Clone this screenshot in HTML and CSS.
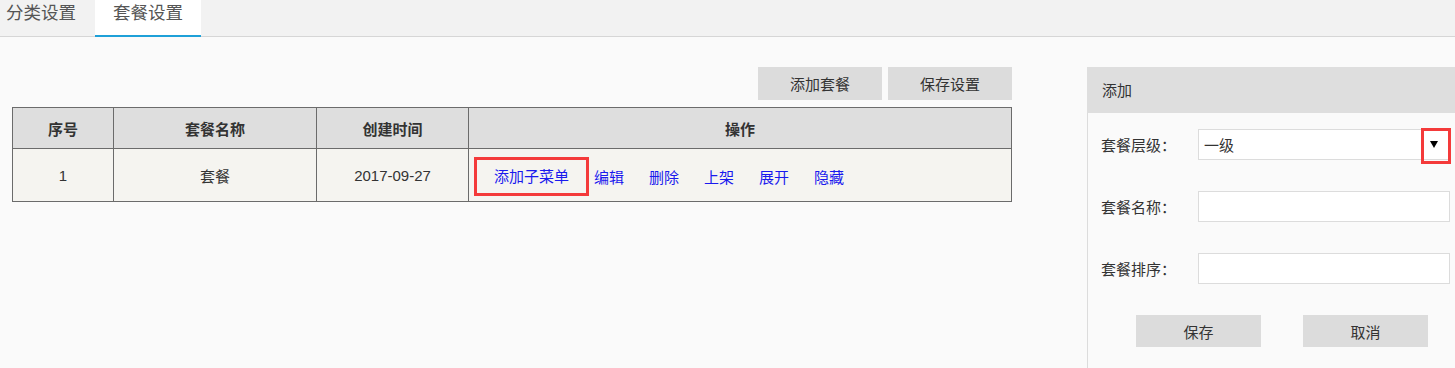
FILE: index.html
```html
<!DOCTYPE html>
<html lang="zh-CN">
<head>
<meta charset="utf-8">
<title>套餐设置</title>
<link rel="stylesheet" href="styles.css">
</head>
<body>
<div class="tabbar">
  <div class="tab tab-first">分类设置</div>
  <div class="tab tab-active">套餐设置</div>
</div>
<div class="main">
  <div class="left">
    <div class="toolbar">
      <button class="btn">添加套餐</button>
      <button class="btn">保存设置</button>
    </div>
    <table class="grid">
      <colgroup>
        <col class="c1"><col class="c2"><col class="c3"><col class="c4">
      </colgroup>
      <thead>
        <tr><th>序号</th><th>套餐名称</th><th>创建时间</th><th>操作</th></tr>
      </thead>
      <tbody>
        <tr>
          <td>1</td>
          <td>套餐</td>
          <td>2017-09-27</td>
          <td class="ops">
            <div class="oplist">
              <a class="op op-marked">添加子菜单</a>
              <a class="op op-second">编辑</a>
              <a class="op">删除</a>
              <a class="op">上架</a>
              <a class="op">展开</a>
              <a class="op">隐藏</a>
            </div>
          </td>
        </tr>
      </tbody>
    </table>
  </div>
  <div class="panel">
    <div class="panel-head">添加</div>
    <div class="form">
      <div class="row">
        <label class="lbl">套餐层级：</label>
        <div class="select">
          <span class="select-text">一级</span>
          <span class="caret"></span>
          <span class="mark"></span>
        </div>
      </div>
      <div class="row">
        <label class="lbl">套餐名称：</label>
        <div class="input"></div>
      </div>
      <div class="row">
        <label class="lbl">套餐排序：</label>
        <div class="input"></div>
      </div>
      <div class="actions">
        <button class="btn btn-form">保存</button>
        <button class="btn btn-form">取消</button>
      </div>
    </div>
  </div>
</div>
</body>
</html>
```

FILE: styles.css
```css
* { box-sizing: border-box; }
html, body { margin: 0; padding: 0; }
body {
  background: #fafafa;
  font-family: "Liberation Sans", "Noto Sans CJK SC", sans-serif;
  font-size: 15px;
  color: #333;
  width: 1455px;
  height: 368px;
  overflow: hidden;
}

.tabbar {
  display: flex;
  align-items: flex-start;
  height: 37px;
  background: #f2f2f2;
  border-bottom: 1px solid #d6d6d6;
}
.tab {
  height: 36px;
  font-size: 17.5px;
  line-height: 24px;
  color: #555;
  font-family: "Noto Sans CJK SC", sans-serif;
}
.tab-first { padding: 0 19px 0 6px; }
.tab-active {
  padding: 0 18px;
  background: #fff;
  height: 37px;
  border-bottom: 2px solid #1ea0d8;
}

.main { display: flex; align-items: flex-start; }
.left { width: 1012px; padding-left: 12px; padding-top: 30px; }
.toolbar {
  display: flex;
  justify-content: flex-end;
  gap: 6px;
  margin-bottom: 7px;
}
.btn {
  width: 124px;
  height: 33px;
  border: 0;
  background: #dcdcdc;
  font-family: "Noto Sans CJK SC", sans-serif;
  font-size: 15px;
  color: #333;
  padding: 0;
}

.grid {
  width: 1000px;
  border-collapse: collapse;
  table-layout: fixed;
  border: 1px solid #6b6b6b;
}
.c1 { width: 101px; }
.c2 { width: 203px; }
.c3 { width: 152px; }
.grid th, .grid td {
  border: 1px solid #6b6b6b;
  text-align: center;
  padding: 0;
}
.grid th {
  height: 41px;
  background: #dedede;
  font-weight: bold;
  font-family: "Noto Sans CJK SC", sans-serif;
  color: #333;
}
.grid td {
  height: 53px;
  background: #f5f4f0;
  color: #333;
}
.grid td.ops {
  text-align: left;
  vertical-align: top;
  padding: 8px 0 0 5px;
}
.oplist { display: flex; align-items: center; }
.op {
  color: #1a1aee;
  font-family: "Noto Sans CJK SC", sans-serif;
  font-size: 15px;
  margin-left: 25px;
  white-space: nowrap;
}
.op-marked {
  margin-left: 0;
  border: 3px solid #f43a3a;
  padding: 0 17px;
  height: 39px;
  line-height: 31px;
}
.op-second { margin-left: 5px; }

.panel {
  margin-left: 75px;
  margin-top: 30px;
  flex: 1;
  height: 301px;
  border-left: 1px solid #dcdcdc;
}
.panel-head {
  margin-left: -1px;
  height: 46px;
  line-height: 46px;
  background: #dedede;
  padding-left: 15px;
  font-family: "Noto Sans CJK SC", sans-serif;
}
.form { padding: 16px 4px 0 13px; }
.row {
  display: flex;
  align-items: center;
  height: 31px;
  margin-bottom: 31px;
}
.lbl {
  width: 97px;
  font-family: "Noto Sans CJK SC", sans-serif;
  color: #333;
}
.select, .input {
  position: relative;
  width: 252px;
  height: 31px;
  background: #fff;
  border: 1px solid #dcdcdc;
}
.select-text {
  display: block;
  padding-left: 5px;
  line-height: 29px;
  font-family: "Noto Sans CJK SC", sans-serif;
}
.caret {
  position: absolute;
  right: 11px;
  top: 11px;
  width: 0;
  height: 0;
  border-left: 4px solid transparent;
  border-right: 4px solid transparent;
  border-top: 7px solid #000;
}
.mark {
  position: absolute;
  left: 222px;
  top: -2px;
  width: 30px;
  height: 36px;
  border: 3px solid #f43a3a;
}
.actions {
  display: flex;
  gap: 42px;
  padding-left: 35px;
}
.btn-form { width: 125px; height: 32px; }
```
